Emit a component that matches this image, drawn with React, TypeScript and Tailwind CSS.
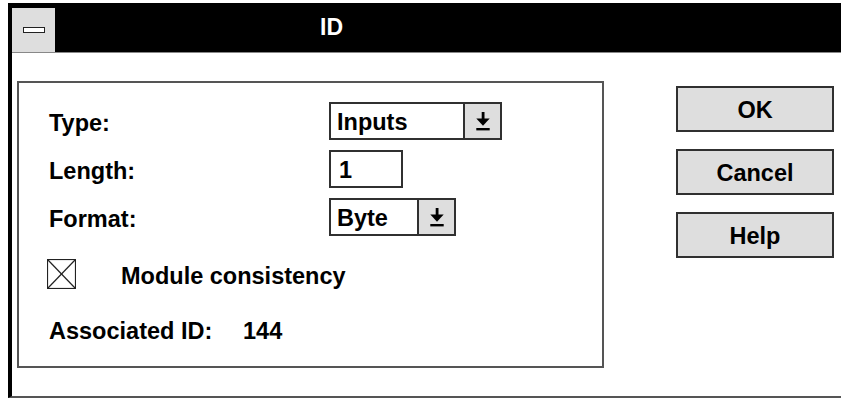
import React from 'react';

const font = { fontFamily: '"Liberation Sans", Arial, sans-serif' };

function DropArrow() {
  return (
    <svg width="14" height="19" viewBox="0 0 14 19" className="block">
      <rect x="5.7" y="0" width="2.8" height="8" fill="#000" />
      <polygon points="0.3,6.5 13.7,6.5 7,13.8" fill="#000" />
      <rect x="0.3" y="16" width="13.4" height="2.4" fill="#000" />
    </svg>
  );
}

function Dropdown({ value, width }: { value: string; width: string }) {
  return (
    <div className={`flex h-[38px] ${width} border-2 border-[#303030] bg-white`}>
      <div className="flex-1 flex items-center pl-[6px] pt-[4px] text-[23.5px] font-bold text-black">{value}</div>
      <div className="w-[37px] flex items-center justify-center border-l-2 border-[#303030] bg-[#dedede]">
        <DropArrow />
      </div>
    </div>
  );
}

function Row({ label, children }: { label: string; children: React.ReactNode }) {
  return (
    <div className="flex items-center h-[38px]">
      <div className="w-[310px] pl-[30px] pt-[5px] text-[23.5px] font-bold text-black">{label}</div>
      {children}
    </div>
  );
}

function DlgButton({ label }: { label: string }) {
  return (
    <div className="w-[158px] h-[46px] flex items-center justify-center pt-[3px] border-2 border-[#303030] bg-[#dedede] text-[23.5px] font-bold text-black">
      {label}
    </div>
  );
}

export default function App() {
  return (
    <div className="w-[841px] h-[398px] bg-white pt-[3px] pl-[8px] overflow-hidden" style={font}>
      <div className="h-[395px] flex flex-col border-l-4 border-l-black border-t-[5px] border-t-black border-b-2 border-b-[#555]">
        {/* Title bar */}
        <div className="h-[44px] flex bg-black border-b border-b-[#888] box-content">
          <div className="w-[43px] h-[44px] flex items-center justify-center bg-[#dedede]">
            <div className="w-[22px] h-[6px] bg-white border border-[#222]" />
          </div>
          <div className="pl-[265px] flex items-center pb-[6px] text-[23px] font-bold text-white">ID</div>
        </div>

        {/* Client area */}
        <div className="flex-1 flex items-start bg-white">
          <div className="ml-[5px] mt-[28px] w-[587px] h-[287px] border-2 border-[#555] flex flex-col pt-[19px]">
            <div className="flex flex-col gap-[10px]">
              <Row label="Type:">
                <Dropdown value="Inputs" width="w-[173px]" />
              </Row>
              <Row label="Length:">
                <div className="w-[74px] h-[38px] flex items-center pl-[8px] pt-[4px] border-2 border-[#303030] bg-white text-[23.5px] font-bold text-black">
                  1
                </div>
              </Row>
              <Row label="Format:">
                <Dropdown value="Byte" width="w-[127px]" />
              </Row>
            </div>

            <div className="mt-[23px] flex items-center h-[30px] pl-[28px]">
              <svg width="29" height="30" viewBox="0 0 29 30" className="block">
                <rect x="0.5" y="0.5" width="28" height="29" fill="#fff" stroke="#222" strokeWidth="1.2" />
                <line x1="1" y1="1" x2="28" y2="29" stroke="#222" strokeWidth="1.2" />
                <line x1="28" y1="1" x2="1" y2="29" stroke="#222" strokeWidth="1.2" />
              </svg>
              <span className="ml-[45px] pt-[6px] text-[23.5px] font-bold text-black">Module consistency</span>
            </div>

            <div className="mt-[24px] flex items-center h-[30px] pl-[30px] pt-[8px] text-[23.5px] font-bold text-black">
              <span className="w-[194px]">Associated ID:</span>
              <span>144</span>
            </div>
          </div>

          <div className="ml-[72px] mt-[33px] flex flex-col gap-[17px]">
            <DlgButton label="OK" />
            <DlgButton label="Cancel" />
            <DlgButton label="Help" />
          </div>
        </div>
      </div>
    </div>
  );
}
